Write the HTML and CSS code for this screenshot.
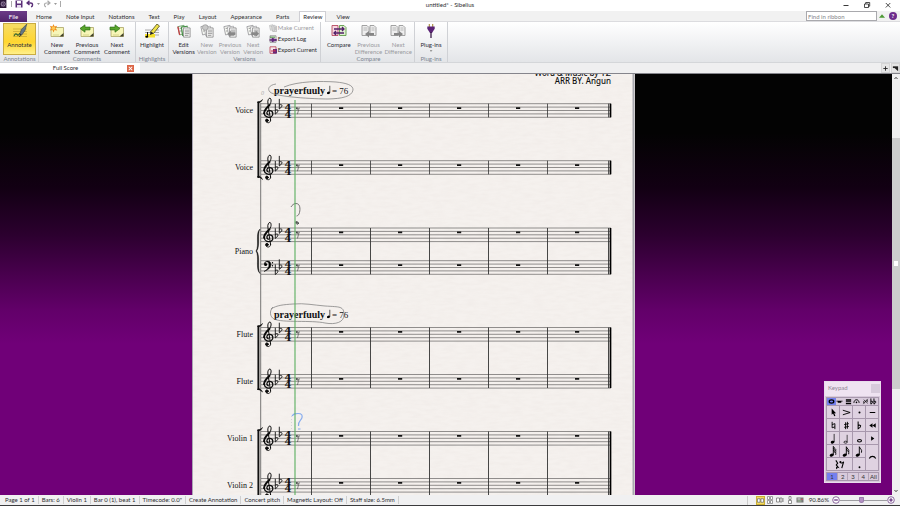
FILE: index.html
```html
<!DOCTYPE html>
<html lang="en">
<head>
<meta charset="utf-8">
<title>untitled* - Sibelius</title>
<link rel="stylesheet" href="styles.css">
</head>
<body>
<svg class="defs" aria-hidden="true">
  <defs>
    <symbol id="i-note" viewBox="0 0 16 14">
      <path d="M2 3.500h12.500v9H2z" fill="#f7f6b8" stroke="#a09a55" stroke-width=".7"/>
      <path d="M10.500 12.500l4-3.600v3.600z" fill="#3f3f2a"/><path d="M4 11h6" stroke="#d5d28a" stroke-width="1"/>
    </symbol>
    <symbol id="i-pages" viewBox="0 0 16 16">
      <path d="M1 3l7-1.500 2 9-7 2z" fill="#f6f8f3" stroke="currentColor" stroke-width="1"/>
      <path d="M5 3.500l7-1 1.500 10-7 1z" fill="#fff" stroke="currentColor" stroke-width=".8"/>
      <path d="M7.500 4.500h7.500v10.500h-7.500z" fill="#f8f8f8" stroke="#777" stroke-width=".8"/>
      <path d="M9 7h5M9 9h5M9 11h5M9 13h4M3 5l2 0M3.500 8l2 0" stroke="#777" stroke-width=".8"/>
    </symbol>
    <symbol id="i-diff" viewBox="0 0 16 14">
      <path d="M1 1.500h5l2 2v8H1zM9 1.500h4l2 2v8H9z" fill="#eee" stroke="#999" stroke-width=".9"/>
      <path d="M2.500 4h4M2.500 6h4M10.500 4h3M10.500 6h3" stroke="#aaa" stroke-width=".8"/>
    </symbol>
    <symbol id="i-qn" viewBox="0 0 8 12"><ellipse cx="3" cy="10" rx="2" ry="1.500" transform="rotate(-20 3 10)"/><path d="M4.700 1v9" stroke="#000" stroke-width=".8"/></symbol>
    <symbol id="i-flag2" viewBox="0 0 10 12"><ellipse cx="3" cy="10" rx="2.200" ry="1.600" transform="rotate(-20 3 10)"/><path d="M4.800 10V.8c.5 2.200 3.600 2.700 2.600 5.800M4.800 3.200c.5 2.200 3.600 2.700 2.600 5.800" fill="none" stroke="#000"/></symbol>
    <symbol id="i-flag3" viewBox="0 0 10 12"><ellipse cx="3" cy="10" rx="2.200" ry="1.600" transform="rotate(-20 3 10)"/><path d="M4.800 10V.4c.5 2 3.600 2.500 2.600 5M4.800 2.500c.5 2 3.600 2.500 2.600 5M4.800 4.600c.5 2 3.600 2.500 2.600 5" fill="none" stroke="#000"/></symbol>
    <symbol id="i-flag1" viewBox="0 0 10 12"><ellipse cx="3" cy="10" rx="2.200" ry="1.600" transform="rotate(-20 3 10)"/><path d="M4.800 10V.8c.5 2.200 3.600 3 2.300 6.500" fill="none" stroke="#000"/></symbol>
  </defs>
</svg>

<header class="titlebar">
  <div class="quick">
    <svg class="app-icon" viewBox="0 0 10 10"><path d="M0 0h8v10H0z" fill="#2c1838"/><circle cx="4" cy="5" r="2.600" fill="none" stroke="#b9a6c4"/><path d="M2 2l4 6M6 2L2 8" stroke="#8b749c" stroke-width=".7"/></svg>
    <span class="rule"></span>
    <button class="plain" aria-label="Save"><svg viewBox="0 0 8 8"><path d="M.5.5h7v7h-7z" fill="#5b2f78"/><path d="M2 1h4v2.500H2z" fill="#fff"/><path d="M2 5h4v3H2z" fill="#e6dcec"/></svg></button>
    <button class="plain" aria-label="Undo"><svg viewBox="0 0 8 8"><path d="M3.500.7L1 3l2.500 2M1.500 3h3c2.800 0 2.500 3.500.5 3.800" fill="none" stroke="#5b2f78" stroke-width="1.400"/></svg></button>
    <span class="drop"></span>
    <button class="plain redo" aria-label="Redo"><svg viewBox="0 0 8 8"><path d="M4.500.7L7 3 4.500 5M6.500 3h-3C.7 3 1 6.500 3 6.800" fill="none" stroke="#aaa" stroke-width="1.200"/></svg></button>
    <span class="drop"></span>
    <span class="rule"></span>
  </div>
  <h1 class="title">untitled* - Sibelius</h1>
  <div class="window-buttons">
    <button class="plain" aria-label="Minimize"><svg viewBox="0 0 8 8"><path d="M1.500 4.500h5" stroke="#222" stroke-width=".9"/></svg></button>
    <button class="plain" aria-label="Restore"><svg viewBox="0 0 8 8"><path d="M1.500 3h4v3.500h-4zM2.700 3V1.500h4V5.200H5.500" fill="none" stroke="#222" stroke-width=".8"/></svg></button>
    <button class="plain" aria-label="Close"><svg viewBox="0 0 8 8"><path d="M1.800 2l4.500 4.500M6.300 2L1.800 6.500" stroke="#222" stroke-width=".8"/></svg></button>
  </div>
</header>

<nav class="tabs">
  <button class="tab file">File</button>
  <button class="tab">Home</button>
  <button class="tab">Note Input</button>
  <button class="tab">Notations</button>
  <button class="tab">Text</button>
  <button class="tab">Play</button>
  <button class="tab">Layout</button>
  <button class="tab">Appearance</button>
  <button class="tab">Parts</button>
  <button class="tab active">Review</button>
  <button class="tab">View</button>
  <input class="find" type="text" placeholder="Find in ribbon" aria-label="Find in ribbon">
  <button class="plain" aria-label="Collapse ribbon"><svg viewBox="0 0 8 8"><path d="M1 5.800L4 2.300 7 5.800z" fill="#4e9a36"/></svg></button>
  <button class="plain help" aria-label="Help">?</button>
</nav>

<div class="ribbon">
  <section class="group g-annotations">
    <div class="row">
      <button class="big on"><svg viewBox="0 0 16 14"><path d="M1 5h14M1 7.500h14M1 10h14M1 12.500h14" stroke="#b99a2c" stroke-width=".6"/><path d="M2 12c3-6 3 3 6-3" fill="none" stroke="#3a6a30" stroke-width="1.200"/><path d="M14.800 0L13 6.500l-3.500 4.800-1.700-.8 1.500-5z" fill="#657784" stroke="#39454c" stroke-width=".6"/><path d="M9 10l-1.500 2.800" stroke="#222"/></svg><span>Annotate</span></button>
    </div>
    <h2>Annotations</h2>
  </section>
  <section class="group g-comments">
    <div class="row">
      <button class="big"><svg viewBox="0 0 16 14"><use href="#i-note"/><path d="M4.500 0l1 2.600 2.700-.8-1.500 2.400 1.500 2.300-2.700-.6-1 2.600-1-2.600-2.700.6 1.500-2.300L.8 1.800l2.700.8z" fill="#ee8c1b"/><circle cx="4.500" cy="4.200" r="1.800" fill="#ffc751"/></svg><span>New<br>Comment</span></button>
      <button class="big"><svg viewBox="0 0 16 14"><use href="#i-note"/><path d="M1 4.500L6 .8v2.300h5v2.800H6v2.300z" fill="#58a52c" stroke="#2f701a" stroke-width=".7"/></svg><span>Previous<br>Comment</span></button>
      <button class="big"><svg viewBox="0 0 16 14"><use href="#i-note"/><path d="M11 4.500L6 .8v2.300H1v2.800h5v2.300z" fill="#58a52c" stroke="#2f701a" stroke-width=".7"/></svg><span>Next<br>Comment</span></button>
    </div>
    <h2>Comments</h2>
  </section>
  <section class="group g-highlights">
    <div class="row">
      <button class="big"><svg viewBox="0 0 16 14"><path d="M1 6h14M1 8.500h14M1 11h14" stroke="#777" stroke-width=".6"/><path d="M1 10h10v3.500H1z" fill="#f4df2b"/><path d="M13 0l2.500 2L9.500 9.500 6.500 8z" fill="#efe24a" stroke="#4e4a22" stroke-width=".8"/><path d="M6.500 7.500l3 2-3.500 1.500z" fill="#222"/><path d="M3.500 8v5" stroke="#111"/><ellipse cx="2.800" cy="12.800" rx="1.500" ry="1"/></svg><span>Highlight</span></button>
    </div>
    <h2>Highlights</h2>
  </section>
  <section class="group g-versions">
    <div class="row">
      <button class="big v color"><svg viewBox="0 0 16 16"><use href="#i-pages"/><path d="M1 3l2 9.500" stroke="#c43d43" stroke-width="1.500"/><path d="M5 3.500l1.500 10M5 3.500l7-1" stroke="#459045" stroke-width="1.200" fill="none"/></svg><span>Edit<br>Versions</span></button>
      <button class="big v" disabled><svg viewBox="0 0 16 16"><use href="#i-pages"/><circle cx="6" cy="4" r="3.200" fill="#c8c8c8" stroke="#999" stroke-width=".8"/></svg><span>New<br>Version</span></button>
      <button class="big v" disabled><svg viewBox="0 0 16 16"><use href="#i-pages"/><path d="M5 11l4-3.500v2h5v3H9v2z" fill="#888"/></svg><span>Previous<br>Version</span></button>
      <button class="big v" disabled><svg viewBox="0 0 16 16"><use href="#i-pages"/><path d="M15 11l-4-3.500v2H6v3h5v2z" fill="#888"/></svg><span>Next<br>Version</span></button>
      <div class="stack">
        <button class="small" disabled><svg viewBox="0 0 16 16"><use href="#i-pages"/></svg>Make Current</button>
        <button class="small"><svg viewBox="0 0 8 8"><path d="M1 .8h6v6.500H1z" fill="#eee" stroke="#777" stroke-width=".7"/><path d="M1 2.200h5" stroke="#4a943f"/><path d="M3 3.200v3.500l4.800-1.700z" fill="#632a7d" stroke="#632a7d"/><path d="M.5 5h4" stroke="#632a7d" stroke-width="1.500"/></svg>Export Log</button>
        <button class="small"><svg viewBox="0 0 8 8"><path d="M1 .8h6v6.500H1z" fill="#f5e9ec" stroke="#bf5061" stroke-width=".9"/><path d="M4 3h4v4.500H4z" fill="#632a7d"/><path d="M2 5h4l-1-1.500" stroke="#c02e50" stroke-width="1.200" fill="none"/></svg>Export Current</button>
      </div>
    </div>
    <h2>Versions</h2>
  </section>
  <section class="group g-compare">
    <div class="row">
      <button class="big"><svg viewBox="0 0 16 14"><path d="M1 1.500h6v10H1z" fill="#f7d7e0" stroke="#b64960" stroke-width=".9"/><path d="M8.500 1.500H13l2 2v8H8.500z" fill="#e0f1d2" stroke="#609b49" stroke-width=".9"/><path d="M3 5h10M11 3l2 2-2 2M13 9H3M5 7L3 9l2 2" fill="none" stroke="#532069" stroke-width="1.300"/></svg><span>Compare</span></button>
      <button class="big" disabled><svg viewBox="0 0 16 14"><use href="#i-diff"/><path d="M4 10l4-3v2h5v2.500H8v2z" fill="#858585"/></svg><span>Previous<br>Difference</span></button>
      <button class="big" disabled><svg viewBox="0 0 16 14"><use href="#i-diff"/><path d="M13 10L9 7v2H4v2.500h5v2z" fill="#858585"/></svg><span>Next<br>Difference</span></button>
    </div>
    <h2>Compare</h2>
  </section>
  <section class="group g-plugins">
    <div class="row">
      <button class="big"><svg viewBox="0 0 16 14"><path d="M6.300 0v3M9.700 0v3" stroke="#a58a38" stroke-width="1.100"/><path d="M4.300 2.500h7.400v2.300L9 9H7L4.300 4.800z" fill="#5b2376"/><path d="M8 8v6" stroke="#3a1b49" stroke-width="1.300"/></svg><span>Plug-ins</span><i class="drop"></i></button>
    </div>
    <h2>Plug-ins</h2>
  </section>
</div>

<div class="doc-tabs">
  <div class="doc-tab"><span>Full Score</span><button class="close" aria-label="Close tab"><svg viewBox="0 0 6 6"><path d="M1.500 1.500l3 3M4.500 1.500l-3 3" stroke="#fff" stroke-width=".9"/></svg></button></div>
  <button class="doc-btn" aria-label="New tab"><svg viewBox="0 0 8 8"><path d="M4 1.500v5M1.500 4h5" stroke="#222"/></svg></button>
  <button class="doc-btn" aria-label="Switch tab"><svg viewBox="0 0 8 8"><path d="M1 1.500h6v2H1z" fill="#222"/><path d="M3 3.500h4V7z" fill="#222"/></svg></button>
</div>

<main class="workspace">
  <div class="canvas">
    <svg class="score" viewBox="192 74 443 421" preserveAspectRatio="xMinYMin slice" role="img" aria-label="Score page">
      <defs>
        <filter id="paper" x="0" y="0" width="1" height="1"><feTurbulence type="fractalNoise" baseFrequency=".09 .35" numOctaves="2" seed="4"/><feColorMatrix values="0 0 0 0 .5  0 0 0 0 .42  0 0 0 0 .38  .5 0 0 0 -.16"/></filter>
        <g id="lines"><path d="M261 0H611M261 3.400H611M261 6.800H611M261 10.200H611M261 13.600H611" stroke="#4b4a49" stroke-width=".6"/></g>
        <g id="flat"><path d="M0-6.500V3.600C3.600 1.200 3.500-1.900 0-.4" fill="none" stroke="#111" stroke-width=".9"/></g>
        <g id="meter"><text x="288" y="6.900" text-anchor="middle">4</text><text x="288" y="13.900" text-anchor="middle">4</text></g>
        <g id="rest8"><circle cx="296.900" cy="4.600" r="1" fill="#444"/><path d="M296.800 5.500c1.200.5 2-.3 2.400-1.400L297.400 10.500" fill="none" stroke="#555" stroke-width=".7"/></g>
        <g id="rests"><path d="M339 3.600h4.200v1.700H339zM398 3.600h4.200v1.700H398zM457 3.600h4.200v1.700H457zM516 3.600h4.200v1.700H516zM575 3.600h4.200v1.700H575z" fill="#111"/></g>
        <g id="bars"><path d="M311.500 0V13.600M370.500 0V13.600M429.500 0V13.600M488.500 0V13.600M547.500 0V13.600M608.500 0V13.600" stroke="#333" stroke-width=".8"/><path d="M610.500 0V13.600" stroke="#000" stroke-width="1.700"/></g>
        <g id="gclef" fill="none" stroke="#0b0b0b" stroke-linecap="round"><path d="M270.600 16.500L267.900-.5C267.300-3.500 269-5.800 270-5.600C271.500-5 271.800-.8 268.800 2.200" stroke-width="1"/><path d="M269.500 1.300C266 4.600 263.900 6.500 264.100 9.600" stroke-width="1.900"/><path d="M264.100 9.500C264.500 13.500 269 14.400 271.300 13C274 11.200 273 6.900 269.800 6.900C266.400 6.900 266 10.200 268.300 11.300" stroke-width="1.300"/><path d="M270.600 16.500C270.500 19.500 267.500 19.800 266 18" stroke-width=".9"/><circle cx="266.900" cy="16.700" r="1.300" fill="#0b0b0b"/></g>
        <g id="fclef"><circle cx="265.600" cy="3.800" r="1.500"/><path d="M264.200 3.300C264.800-.5 271-.8 270.900 4C270.800 7.600 267 9.600 264 10.800C267.500 8.600 269 7 269 3.800C269 .6 266 .3 264.900 2.500z" stroke="#0b0b0b" stroke-width=".5"/><circle cx="272.500" cy="2" r=".7"/><circle cx="272.500" cy="5" r=".7"/></g>
        <g id="open"><use href="#lines"/><use href="#meter"/><use href="#rest8"/><use href="#rests"/></g>
        <g id="treble"><use href="#open"/><use href="#gclef"/><use href="#flat" x="275.300" y="6.800"/><use href="#flat" x="279.300" y="1.700"/></g>
        <g id="bass"><use href="#open"/><use href="#fclef"/><use href="#flat" x="275.300" y="10.200"/><use href="#flat" x="279.300" y="5.100"/></g>
      </defs>
      <rect x="192" y="74" width="443" height="421" fill="#f5f1ee"/>
      <rect x="192" y="74" width="443" height="421" filter="url(#paper)" opacity=".22"/>
      <path d="M192.500 74v421" stroke="#aaa6b3"/><path d="M633.500 74v421" stroke="#a9a9af" stroke-width="2"/>

      <text class="credit" x="611" y="76" text-anchor="end">Word &amp; Music by <tspan class="author">YZ</tspan></text>
      <text class="credit" x="611" y="84" text-anchor="end">ARR BY. Angun</text>
      <text class="bar-no" x="261" y="95">0</text>

      <use href="#treble" y="103.700"/><use href="#bars" y="103.700"/>
      <use href="#treble" y="160.700"/><use href="#bars" y="160.700"/>
      <use href="#treble" y="228"/><use href="#bass" y="260.700"/>
      <use href="#treble" y="327.500"/><use href="#treble" y="374.500"/>
      <use href="#treble" y="431.500"/><use href="#treble" y="478.500"/>
      <path d="M311.500 228V274.300M370.500 228V274.300M429.500 228V274.300M488.500 228V274.300M547.500 228V274.300M608.500 228V274.300M311.500 327.500V388M370.500 327.500V388M429.500 327.500V388M488.500 327.500V388M547.500 327.500V388M608.500 327.500V388M311.500 431.500V495M370.500 431.500V495M429.500 431.500V495M488.500 431.500V495M547.500 431.500V495M608.500 431.500V495" stroke="#333" stroke-width=".9"/>
      <path d="M610.500 228V274.300M610.500 327.500V388M610.500 431.500V495" stroke="#000" stroke-width="1.700"/>
      <path d="M260.700 103V495" stroke="#555" stroke-width=".8"/>
      <path d="M258.400 101.500V178M258.400 325.500V390M258.400 429.500V495" stroke="#111" stroke-width="1.900"/>
      <path d="M257.500 102c2 0 3.500-1 5-2.500-1 2.200-2.500 3.300-4.500 3.500zM257.500 177c2 0 3.500 1 5 2.500-1-2.200-2.500-3.300-4.500-3.500zM257.500 326c2 0 3.500-1 5-2.500-1 2.200-2.500 3.300-4.500 3.500zM257.500 389.500c2 0 3.500 1 5 2.500-1-2.200-2.500-3.300-4.500-3.500zM257.500 430c2 0 3.500-1 5-2.500-1 2.200-2.500 3.300-4.500 3.500z" stroke="#111" stroke-width=".6"/>
      <path d="M260 229c-5 4-.5 17-4 22 3.500 5-1 18.500 4 22.500-3-5 .5-17.500-3.300-22.500 3.800-5 .3-17 3.300-22z" stroke="#222" stroke-width=".5"/>

      <g class="part-names" text-anchor="end">
        <text x="253" y="113">Voice</text><text x="253" y="170">Voice</text><text x="253" y="254">Piano</text>
        <text x="253" y="337">Flute</text><text x="253" y="384">Flute</text><text x="253" y="441">Violin 1</text><text x="253" y="488">Violin 2</text>
      </g>
      <text class="tempo" x="274" y="94">prayerfuuly</text><text class="metro" x="332" y="94">= 76</text>
      <text class="tempo" x="274" y="318">prayerfuuly</text><text class="metro" x="332" y="318">= 76</text>
      <use href="#i-qn" x="326" y="85" width="6.500" height="9.500"/><use href="#i-qn" x="326" y="309" width="6.500" height="9.500"/>

      <g fill="none" stroke="#777" stroke-width=".7">
        <path d="M276 84c-7 1-9 5-6 8 5 5 45 7 58 7 14-.3 24-2.500 25-9 .5-5-7-7-17-8-15-1-38-1-52 5"/>
        <path d="M273 307c-4 4-3 10 1 12 8 4 38 1 51 4 11 2 19-1 19-8 0-9-4-8-19-9-12-1-20-3-32-2-9 .7-16 1-22 5"/>
      </g>
      <path d="M291 207c1-2 3-3.500 5-3.500 4 0 4.500 5 3.500 9-.5 2-1 3-3 3.500" fill="none" stroke="#555" stroke-width=".8"/>
      <path d="M295.500 222c2-1 3 .5 3 1.500-1 1.500-3.500 0-2-1.500 1.500 1.500 1 1 2 2" fill="none" stroke="#333" stroke-width="1"/>
      <path d="M292 416c2-2.500 3-2.500 6-2.500 4 0 4.500 2 4 4-.5 3-4 3-3.500 8.500M298 429h2.500" fill="none" stroke="#87acee" stroke-width="1.200"/>
      <path d="M291.500 416v16" stroke="#b7b9c3" stroke-width=".5" stroke-dasharray="1 2"/>
      <path d="M295 100V495" stroke="#58ae5e" stroke-width="1.100"/>
    </svg>

    <section class="keypad" aria-label="Keypad">
      <header class="kp-head"><span>Keypad</span><button class="kp-close" aria-label="Close keypad"></button></header>
      <div class="kp-tabs">
        <button class="sel" aria-label="Common notes"><svg viewBox="0 0 8 8"><ellipse cx="4" cy="4" rx="2.600" ry="1.800" fill="none" stroke="#000" stroke-width="1.500"/></svg></button>
        <button aria-label="More notes"><svg viewBox="0 0 8 8"><path d="M.5 3h7v1H6v1.500H2V4H.5z"/></svg></button>
        <button aria-label="Beams"><svg viewBox="0 0 8 8"><path d="M1 1.500h6V3H1zM1 3.700h6v1H1zM1 5.500h6V7H1z"/></svg></button>
        <button aria-label="Articulations"><svg viewBox="0 0 8 8"><path d="M1 5.500C1.500.8 6.500.8 7 5.500" fill="none" stroke="#000" stroke-width="1.100"/><circle cx="4" cy="5" r=".9"/></svg></button>
        <button aria-label="Jazz"><svg viewBox="0 0 8 8"><path d="M1.500 7l5-6M2 2l4.500 4" stroke="#000" stroke-width=".8"/><circle cx="2" cy="4.500" r=".8"/><circle cx="6" cy="3.500" r=".8"/></svg></button>
        <button aria-label="Accidentals"><svg viewBox="0 0 8 8"><path d="M1 .5v6.500C4 5.500 3.500 2.500 1 4M4.500.5v6.500c3-1.500 2.500-4.500 0-3" fill="none" stroke="#000" stroke-width="1.100"/></svg></button>
      </div>
      <div class="kp-grid">
        <button aria-label="Select"><svg viewBox="0 0 12 12"><path d="M4 1.500v7l1.500-1.300 1.300 3 1.300-.6-1.300-2.800h2z"/></svg></button>
        <button aria-label="Accent"><svg viewBox="0 0 12 12"><path d="M2 3.500l8 2.500-8 2.500" fill="none" stroke="#000"/></svg></button>
        <button aria-label="Staccato"><svg viewBox="0 0 12 12"><circle cx="6" cy="6" r="1.100"/></svg></button>
        <button aria-label="Tenuto"><svg viewBox="0 0 12 12"><path d="M3 6h6" stroke="#000" stroke-width="1.100"/></svg></button>
        <button aria-label="Natural"><svg viewBox="0 0 12 12"><path d="M4.500 2v6.500l3-1M7.500 10V4l-3 1" fill="none" stroke="#000"/></svg></button>
        <button aria-label="Sharp"><svg viewBox="0 0 12 12"><path d="M5 2.500v7.500M7 2v7.500M3.500 5l5-1M3.500 8l5-1" stroke="#000"/></svg></button>
        <button aria-label="Flat"><svg viewBox="0 0 12 12"><path d="M4.500 1.500v8c4-2 3.500-5 0-3.500" fill="none" stroke="#000" stroke-width="1.100"/></svg></button>
        <button aria-label="Previous"><svg viewBox="0 0 12 12"><path d="M6 3.500v5L2.500 6zM9.500 3.500v5L6 6z"/></svg></button>
        <button aria-label="Quarter note"><svg viewBox="0 0 8 12"><use href="#i-qn"/></svg></button>
        <button aria-label="Half note"><svg viewBox="0 0 8 12"><ellipse cx="3" cy="10" rx="1.800" ry="1.100" fill="none" stroke="#000" stroke-width=".8"/><path d="M4.700 2v8" stroke="#000" stroke-width=".7"/></svg></button>
        <button aria-label="Whole note"><svg viewBox="0 0 12 12"><ellipse cx="6" cy="8.500" rx="2.200" ry="1.300" fill="none" stroke="#000" stroke-width="1.100"/></svg></button>
        <button aria-label="Next"><svg viewBox="0 0 12 12"><path d="M4.500 3.500v5L8 6z"/></svg></button>
        <button aria-label="Thirty-second note"><svg viewBox="0 0 10 12"><use href="#i-flag3"/></svg></button>
        <button aria-label="Sixteenth note"><svg viewBox="0 0 10 12"><use href="#i-flag2"/></svg></button>
        <button aria-label="Eighth note"><svg viewBox="0 0 10 12"><use href="#i-flag1"/></svg></button>
        <button class="tall" aria-label="Tie"><svg viewBox="0 0 12 12"><path d="M2.500 7C4 4 8 4 9.500 7" fill="none" stroke="#000" stroke-width="1.200"/></svg></button>
        <button class="wide" aria-label="Rest"><svg viewBox="0 0 12 12"><path d="M2 1.500l2 3-1.500 2 2 2.500c-2-.5-2 .5-1.300 2M6.500 3.500c1 1.500 3 1 4-.5L8.500 10" fill="none" stroke="#000" stroke-width="1.200"/><circle cx="7" cy="3.300" r="1.100"/></svg></button>
        <button aria-label="Dot"><svg viewBox="0 0 12 12"><circle cx="6" cy="9" r="1"/></svg></button>
      </div>
      <div class="kp-voices"><button class="sel">1</button><button>2</button><button>3</button><button>4</button><button>All</button></div>
    </section>
  </div>
  <div class="scrollbar" aria-hidden="true">
    <svg viewBox="0 0 8 8"><path d="M2.500 5L4 3.300 5.500 5" fill="none" stroke="#444"/></svg>
    <div class="track"><div class="thumb"><i></i></div></div>
    <svg viewBox="0 0 8 8"><path d="M2.500 3L4 4.700 5.500 3" fill="none" stroke="#444"/></svg>
  </div>
</main>

<footer class="status">
  <span>Page 1 of 1</span><span>Bars: 6</span><span>Violin 1</span><span>Bar 0 (1), beat 1</span><span>Timecode: 0.0"</span><span>Create Annotation</span><span>Concert pitch</span><span>Magnetic Layout: Off</span><span>Staff size: 6.5mm</span>
  <div class="views">
    <button class="sel" aria-label="Pages horizontally"><svg viewBox="0 0 8 8"><path d="M.5 2h3v4h-3zM4.500 2h3v4h-3z" fill="#fff" stroke="#666" stroke-width=".8"/></svg></button>
    <button aria-label="Spreads vertically"><svg viewBox="0 0 8 8"><path d="M1.500.5h2v3h-2zM4.500.5h2v3h-2zM1.500 4.500h2v3h-2zM4.500 4.500h2v3h-2z" fill="#fff" stroke="#777" stroke-width=".7"/></svg></button>
    <button aria-label="Single pages"><svg viewBox="0 0 8 8"><path d="M.5 2h3v4h-3zM4 2h2v4H4zM7 2v4" fill="#fff" stroke="#777" stroke-width=".8"/></svg></button>
    <button aria-label="Single pages vertically"><svg viewBox="0 0 8 8"><path d="M3 .5h2v3H3zM2.500 4.500h3v3h-3z" fill="#fff" stroke="#777" stroke-width=".8"/></svg></button>
    <button aria-label="Panorama"><svg viewBox="0 0 8 8"><path d="M.5 1.500h7v5h-7z" fill="#777"/><path d="M1.500 3h3" stroke="#eee"/><path d="M1.500 5h4" stroke="#a8c9a0"/><path d="M5 3.300h2" stroke="#c56"/></svg></button>
  </div>
  <output class="percent">90.86%</output>
  <button class="zoom" aria-label="Zoom out"><svg viewBox="0 0 8 8"><circle cx="4" cy="4" r="3.300" fill="#fff" stroke="#704287" stroke-width=".8"/><path d="M2.200 4h3.600" stroke="#5b2376" stroke-width="1.200"/></svg></button>
  <input class="slider" type="range" min="0" max="100" value="45" aria-label="Zoom">
  <button class="zoom" aria-label="Zoom in"><svg viewBox="0 0 8 8"><circle cx="4" cy="4" r="3.300" fill="#fff" stroke="#704287" stroke-width=".8"/><path d="M2.200 4h3.600M4 2.200v3.600" stroke="#5b2376" stroke-width="1.200"/></svg></button>
</footer>
</body>
</html>
```
FILE: styles.css
```css
* { box-sizing: border-box; }

body {
  margin: 0;
  height: 100vh;
  display: flex;
  flex-direction: column;
  overflow: hidden;
  background: #fff;
  color: #2d2d30;
  font: 6px/8px Lato, "Open Sans", sans-serif;
}

button, input {
  font: inherit;
  color: inherit;
  margin: 0;
  padding: 0;
  border: 0;
  background: none;
  border-radius: 0;
}

button { display: block; }
svg { display: block; }
h1, h2 { margin: 0; font: inherit; }
.defs { position: absolute; width: 0; height: 0; }
.plain svg { width: 8px; height: 8px; }

/* Title bar */
.titlebar {
  flex: none;
  height: 11px;
  display: grid;
  grid-template-columns: 1fr auto 1fr;
  align-items: start;
}
.quick { display: flex; align-items: center; gap: 3px; }
.app-icon { width: 8px; height: 8px; }
.rule { width: 1px; height: 6px; background: #aaa; }
.drop {
  width: 3px;
  height: 2px;
  background: #999;
  clip-path: polygon(0 0, 100% 0, 50% 100%);
}
.title { line-height: 9px; }
.window-buttons { display: flex; justify-content: flex-end; gap: 13px; padding: 1px 8px 0 0; }

/* Ribbon tabs */
.tabs {
  flex: none;
  height: 11px;
  display: flex;
  align-items: center;
  background: #f1f1f1;
  border-bottom: 1px solid #dcdcdf;
}
.tab { height: 11px; padding: 0 7px; align-self: flex-start; }
.tab.file { width: 27px; padding: 0; margin-right: 2px; background: linear-gradient(#6b3b87, #51256b); color: #fff; }
.tab.active { padding: 0 3px; margin: 0 3px; background: #fff; border: solid #cfcfd4; border-width: 1px 1px 0; }
.find {
  width: 71px;
  height: 10px;
  margin-left: auto;
  padding: 0 1px;
  background: #fff;
  border: 1px solid #a9a9ad;
}
.find::placeholder { color: #85858a; opacity: 1; }
.tabs .plain { margin-left: 1px; }
.tabs .help {
  width: 8px;
  height: 8px;
  margin: 0 3px 0 3px;
  border-radius: 50%;
  background: #6d2c8c;
  color: #fff;
  font-weight: 700;
  line-height: 8px;
}

/* Ribbon */
.ribbon {
  flex: none;
  height: 41px;
  display: flex;
  background: linear-gradient(#fff, #e3e5e8);
  border-bottom: 1px solid #d4d6d9;
}
.group {
  display: flex;
  flex-direction: column;
  justify-content: space-between;
  border-right: 1px solid #cfd1d5;
  padding: 1px 3px 0;
}
.group h2 { text-align: center; line-height: 7px; color: #7c8490; }
.row { display: flex; }
.big {
  width: 30px;
  height: 32px;
  padding-top: 1px;
  display: flex;
  flex-direction: column;
  align-items: center;
  line-height: 7px;
  color: #2b2b35;
}
.big span { white-space: nowrap; margin-top: 3px; }
.big svg { width: 16px; height: 14px; flex: none; }
.big .drop { margin-top: 2px; }
.big:disabled, .small:disabled { color: #9b9b9f; }
.big.on {
  width: 33px;
  background: linear-gradient(#f6dc66, #ffd630 60%, #fff08a);
  border: 1px solid #c9ac43;
  padding-top: 0;
}
.g-annotations { width: 39px; padding: 1px 2px 0 3px; }
.g-comments { width: 97px; }
.g-highlights { width: 33px; padding: 1px 1px 0; }
.g-versions { width: 152px; }
.g-compare { width: 94px; padding: 1px 1px 0 3px; }
.g-plugins { width: 33px; padding: 1px 1px 0; }
.big.v { width: 24px; }
.color svg { color: #68a069; }
.stack { display: flex; flex-direction: column; gap: 3px; padding: 1px 0 0 4px; }
.small { display: flex; align-items: center; gap: 1px; white-space: nowrap; }
.small svg { width: 8px; height: 8px; flex: none; }

/* Document tabs */
.doc-tabs {
  flex: none;
  height: 11px;
  display: flex;
  gap: 1px;
  background: #efeff0;
  border-bottom: 1px solid #85858c;
}
.doc-tab {
  width: 140px;
  margin-right: auto;
  display: grid;
  grid-template-columns: 1fr auto;
  align-items: center;
  padding: 0 6px 0 4px;
  text-align: center;
  background: #fff;
}
.close { width: 7px; height: 7px; background: #dc6546; }
.close svg { width: 7px; height: 7px; }
.doc-btn { width: 9px; border: 1px solid #d5d5d5; background: #e6e6e6; }
.doc-btn svg { width: 7px; height: 7px; }

/* Score area */
.workspace { flex: 1; min-height: 0; display: flex; }
.canvas {
  flex: 1;
  min-width: 0;
  position: relative;
  overflow: hidden;
  padding-left: 192px;
  background: linear-gradient(#030303 14%, #120013 27%, #2b002e 38%, #4a004f 48%, #620069 56%, #700078 64%);
}
.score { width: 443px; height: 100%; }
.score text { fill: #111; font-family: "Liberation Serif", serif; }
.score .part-names text { font-size: 8px; }
.score .tempo { font-size: 10px; font-weight: 700; }
.score .metro { font-size: 9px; }
.score .bar-no { font-size: 6px; font-style: italic; fill: #aaa; }
.score .credit { font-family: "Noto Sans", sans-serif; font-size: 8px; font-weight: 500; }
.score .author { font-size: 9px; }
#meter text { font: 700 10px "DejaVu Serif", serif; }

.scrollbar { width: 8px; display: flex; flex-direction: column; background: #f0f0f0; }
.scrollbar svg { width: 8px; height: 8px; flex: none; }
.track { flex: 1; padding-top: 56px; }
.thumb { height: 72%; display: grid; place-items: center; background: #cdcdcd; }
.thumb i { width: 4px; height: 5px; background: #fff; }

/* Floating keypad */
.keypad {
  position: absolute;
  right: 11px;
  bottom: 12px;
  width: 57px;
  padding: 0 1px 1px;
  background: #d8cadb;
  border: 1px solid #e9dcec;
}
.kp-head {
  height: 14px;
  margin: 0 -1px 1px;
  padding: 2px 0 0 3px;
  display: flex;
  justify-content: space-between;
  background: #efe3f1;
  color: #8f8595;
}
.kp-close { width: 9px; height: 9px; background: #d7cbdb; }
.kp-tabs, .kp-voices { display: grid; grid-template-columns: repeat(6, 1fr); border: 1px solid #a898ad; height: 9px; }
.kp-voices { grid-template-columns: repeat(5, 1fr); }
.kp-tabs button, .kp-voices button { display: grid; place-items: center; color: #333; line-height: 7px; }
.kp-voices button + button { border-left: 1px solid #b3a4b8; }
.kp-tabs svg { width: 7px; height: 7px; }
.keypad .sel { background: #7580ee; }
.kp-grid {
  display: grid;
  grid-template-columns: repeat(4, 1fr);
  grid-auto-rows: 12px;
  gap: 1px;
  margin-bottom: 1px;
  border: 1px solid #a898ad;
  border-top: 0;
  background: #a898ad;
}
.kp-grid button { display: grid; place-items: center; background: #dfd2e1; }
.kp-grid svg { height: 11px; width: 11px; }
.kp-grid .tall { grid-row: span 2; }
.kp-grid .wide { grid-column: span 2; }

/* Status bar */
.status {
  flex: none;
  height: 11px;
  display: flex;
  align-items: center;
  padding-left: 2px;
  background: #f0f0f1;
  border-bottom: 1px solid #3a3a3c;
  white-space: nowrap;
}
.status > span { padding: 0 3px; border-right: 1px solid #cfcfcf; }
.views { display: flex; gap: 1px; margin-left: auto; padding-left: 8px; border-left: 1px solid #ccc; }
.views button { width: 9px; height: 9px; display: grid; place-items: center; }
.views svg { width: 8px; height: 8px; }
.views .sel { background: #f4dc61; border: 1px solid #cbae33; }
.views .sel svg { width: 7px; height: 7px; }
.percent { margin: 0 3px 0 4px; }
.zoom svg { width: 8px; height: 8px; }
.zoom:last-child { margin-right: 5px; }
.slider { appearance: none; width: 47px; height: 8px; background: linear-gradient(#9e9ea2, #9e9ea2) center / 100% 1px no-repeat; }
.slider::-webkit-slider-thumb {
  appearance: none;
  width: 5px;
  height: 6px;
  background: #b493c4;
  border: 1px solid #9a7cab;
  border-radius: 1px 1px 3px 3px;
}
```
